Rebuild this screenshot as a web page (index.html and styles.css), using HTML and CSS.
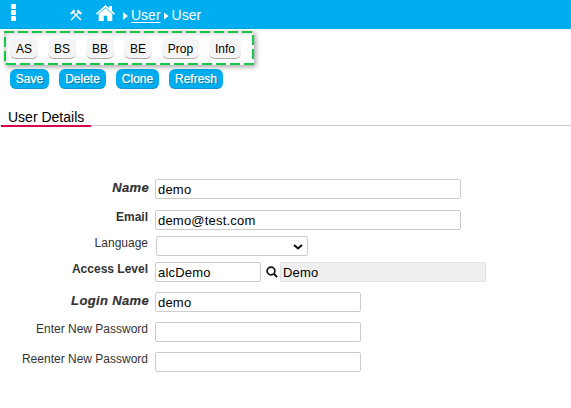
FILE: index.html
```html
<!DOCTYPE html>
<html lang="en">
<head>
<meta charset="utf-8">
<title>User</title>
<link rel="stylesheet" href="styles.css">
</head>
<body>
<header class="topbar">
  <span class="menu"><i></i><i></i><i></i></span>
  <svg class="tools" width="12" height="12" viewBox="0 0 12 12" fill="none" stroke="#fff"><path d="M1 11 9 3M11 11 3 3" stroke-width="1.4"/><path d="M7.4 1.2 11.2 5M4.6 1.2 .8 5" stroke-width="2.2"/></svg>
  <svg class="home" width="19" height="16" viewBox="0 0 19 16" fill="#fff"><path d="M9.5 0 13 3.1V1h3v4.8L19 8.5l-1 1.2L9.5 2.3 1 9.7 0 8.5Z"/><path d="M9.5 3 16.3 9V16H11.3V10.8H7.7V16H2.7V9Z"/></svg>
  <i class="arrow first"></i><a class="crumb link">User</a><i class="arrow"></i><span class="crumb">User</span>
</header>
<nav class="tools-box">
  <svg class="outline" width="250" height="34" viewBox="0 0 250 34"><path d="M0 1H249V33H1V1" /></svg>
  <button class="chip w28">AS</button><button class="chip w28">BS</button><button class="chip w28">BB</button><button class="chip w28">BE</button><button class="chip w37">Prop</button><button class="chip w32">Info</button>
</nav>
<div class="actions">
  <button class="action save">Save</button><button class="action delete">Delete</button><button class="action clone">Clone</button><button class="action refresh">Refresh</button>
</div>
<div class="tabs"><span class="tab">User Details</span></div>
<form class="form">
  <div class="row name"><label class="key">Name</label><input class="field wide" value="demo"></div>
  <div class="row email"><label class="strong">Email</label><input class="field wide" value="demo@test.com"></div>
  <div class="row language"><label>Language</label><div class="field select"><svg width="10" height="6" viewBox="0 0 10 6" fill="none" stroke="#111" stroke-width="2"><path d="M1 .9 5 4.5 9 .9"/></svg></div></div>
  <div class="row access"><label class="strong">Access Level</label><input class="field short" value="alcDemo"><svg class="search" width="12" height="12" viewBox="0 0 12 12" fill="none" stroke="#111"><circle cx="5" cy="5" r="3.9" stroke-width="1.7"/><path d="m7.8 7.8 3.3 3.3" stroke-width="2"/></svg><input class="field disabled" value="Demo" readonly></div>
  <div class="row login"><label class="key">Login Name</label><input class="field medium" value="demo"></div>
  <div class="row enter"><label>Enter New Password</label><input class="field medium"></div>
  <div class="row reenter"><label>Reenter New Password</label><input class="field medium"></div>
</form>
</body>
</html>
```
FILE: styles.css
```css
* { box-sizing: border-box; }
body { margin: 0; height: 408px; overflow: hidden; background: #fff; font-family: "Liberation Sans", Arial, sans-serif; color: #000; }
button, input { font-family: inherit; }
svg { display: block; flex: none; }

.topbar { height: 29px; background: #00adef; display: flex; align-items: flex-start; padding: 4px 0 0 11px; color: #fff; }
.menu { width: 5px; display: flex; flex-direction: column; gap: 1px; }
.menu i { width: 5px; height: 5px; border-radius: 1px; background: #fff; }
.tools { margin: 5px 0 0 54px; }
.home { margin: 1px 0 0 14px; }
.arrow { width: 5px; height: 8px; margin: 8px 3px 0 3px; background: #fff; clip-path: polygon(0 0, 100% 50%, 0 100%); }
.arrow.first { margin-left: 8px; }
.crumb { font-size: 14px; line-height: 16px; margin-top: 3px; }
.link { text-decoration: underline; text-underline-offset: 2px; }

.tools-box { position: relative; width: 250px; height: 34px; margin: 2px 0 0 4px; padding: 7px 6px 0; display: flex; gap: 10px; box-shadow: 2px 2px 5px rgba(0,0,0,.35), inset 2px 2px 5px rgba(0,0,0,.22); }
.outline { position: absolute; inset: 0; fill: none; stroke: #13c84b; stroke-width: 2; stroke-dasharray: 10 4; }
.chip { height: 21px; padding: 1px 0 0; border: 0; border-bottom: 1px solid #aaa; border-radius: 6px; background: #f5f5f5; font-size: 12px; line-height: 20px; color: #000; }
.w28 { width: 28px; }
.w37 { width: 37px; }
.w32 { width: 32px; }

.actions { display: flex; gap: 10px; margin: 4px 0 0 10px; }
.action { height: 20px; padding: 1px 0 0; border: 0; border-bottom: 1px solid #1a91cb; border-radius: 6px; background: #00adef; color: #fff; font-size: 12px; line-height: 19px; -webkit-text-stroke: .25px #fff; text-shadow: 1px 1px 1px rgba(0,0,0,.35); }
.save { width: 39px; }
.delete { width: 47px; }
.clone { width: 43px; }
.refresh { width: 54px; }

.tabs { height: 18px; margin-top: 19px; padding-left: 1px; border-bottom: 1px solid #ccc; }
.tab { display: block; width: 90px; height: 19px; padding-left: 7px; border-bottom: 2px solid #d9004f; font-size: 14px; line-height: 18px; }

.form { margin-top: 53px; }
.row { display: flex; height: 20px; }
label { width: 148px; margin-right: 7px; text-align: right; font-size: 12px; line-height: 14px; color: #333; white-space: nowrap; }
.strong { font-weight: bold; }
.key { width: 149px; margin-right: 6px; font-size: 13px; font-weight: bold; font-style: italic; letter-spacing: .35px; -webkit-text-stroke: .2px #333; }
.name label, .login label { line-height: 18px; }
.field { height: 20px; border: 1px solid #ccc; border-radius: 2px; background: #fff; padding: 1px 2px 0; font-size: 13px; letter-spacing: .2px; color: #000; outline: 0; }
.wide { width: 306px; }
.medium { width: 206px; }
.short { width: 106px; }
.select { width: 152px; margin-left: 1px; padding: 7px 4px 0 0; display: flex; justify-content: flex-end; }
.search { margin: 4px 2px 0 5px; }
.disabled { width: 206px; background: #efefef; border-color: #e0e0e0; }
.email { margin-top: 11px; }
.language, .access { margin-top: 6px; }
.login, .enter, .reenter { margin-top: 10px; }
```
